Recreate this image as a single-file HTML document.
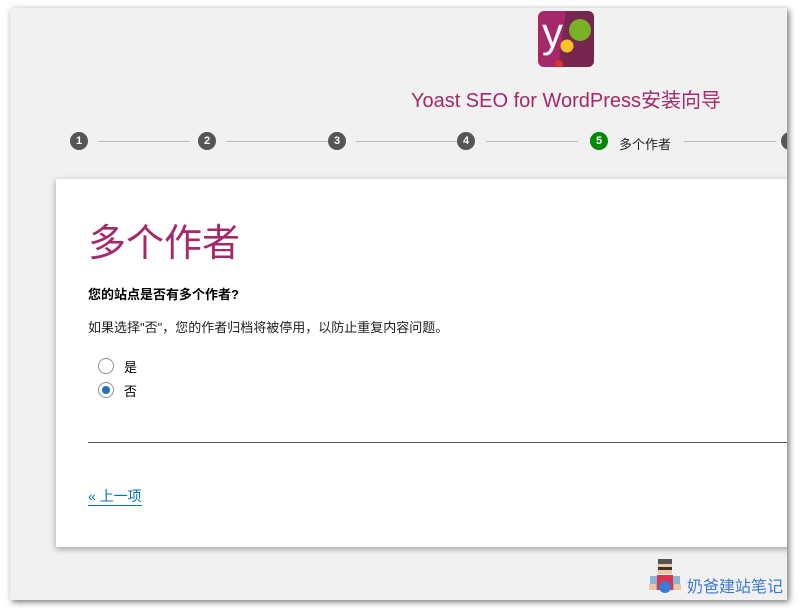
<!DOCTYPE html>
<html><head><meta charset="utf-8"><style>
body{margin:0;width:798px;height:610px;background:#fff;position:relative;overflow:hidden;font-family:"Liberation Sans","Noto Sans CJK SC",sans-serif;}
.frame{position:absolute;left:10px;top:8px;width:777px;height:592px;background:#f1f1f1;box-shadow:2px 2px 6px rgba(0,0,0,.55);overflow:hidden;}
.abs{position:absolute}
.title{left:0;width:1112px;top:76px;text-align:center;color:#a4286a;font-size:20px;}
.line{height:1px;background:#bbb;top:133px}
.c{width:18px;height:18px;border-radius:50%;background:#555;color:#fff;font-size:11px;font-weight:bold;text-align:center;line-height:18px;top:124px}
.card{left:46px;top:171px;width:760px;height:368px;background:#fff;box-shadow:0 2px 6px rgba(0,0,0,.35)}
.radio{width:14px;height:14px;border:1px solid #8c8f94;border-radius:50%;background:#fff}
</style></head><body>
<div class="frame">
  <svg class="abs" style="left:528px;top:3px" width="56" height="56" viewBox="0 0 56 56">
    <rect width="56" height="56" rx="6" fill="#a4286a"/>
    <path d="M28 0H50a6 6 0 0 1 6 6V50a6 6 0 0 1-6 6H20Z" fill="#6c2548" opacity=".8"/>
    <text x="4" y="36" font-family="Liberation Sans" font-size="42" fill="#fff">y</text>
    <circle cx="42" cy="19" r="11" fill="#77b227"/>
    <circle cx="29" cy="35" r="6.5" fill="#fec228"/>
    <circle cx="21" cy="53" r="4" fill="#dc3232"/>
  </svg>
  <div class="abs title">Yoast SEO for WordPress安装向导</div>
  <div class="abs line" style="left:88px;width:92px"></div>
  <div class="abs line" style="left:216px;width:102px"></div>
  <div class="abs line" style="left:346px;width:102px"></div>
  <div class="abs line" style="left:476px;width:92px"></div>
  <div class="abs line" style="left:674px;width:92px"></div>
  <div class="abs c" style="left:60px">1</div>
  <div class="abs c" style="left:188px">2</div>
  <div class="abs c" style="left:318px">3</div>
  <div class="abs c" style="left:447px">4</div>
  <div class="abs c" style="left:580px;background:#008a00">5</div>
  <div class="abs" style="left:609px;top:126px;font-size:13px;color:#222">多个作者</div>
  <div class="abs c" style="left:771px"></div>
  <div class="abs card">
    <div class="abs" style="left:32px;top:42px;font-size:38px;color:#a4286a;line-height:46px">多个作者</div>
    <div class="abs" style="left:32px;top:105px;font-size:13px;font-weight:bold;color:#000">您的站点是否有多个作者?</div>
    <div class="abs" style="left:32px;top:138px;font-size:13px;color:#222">如果选择"否"，您的作者归档将被停用，以防止重复内容问题。</div>
    <div class="abs radio" style="left:42px;top:179px"></div>
    <div class="abs" style="left:68px;top:178px;font-size:13px">是</div>
    <div class="abs radio" style="left:42px;top:203px"><div style="width:8px;height:8px;border-radius:50%;background:#2271b1;margin:3px"></div></div>
    <div class="abs" style="left:68px;top:202px;font-size:13px">否</div>
    <div class="abs" style="left:32px;top:263px;width:740px;height:1px;background:#555"></div>
    <div class="abs" style="left:32px;top:309px;font-size:14px;color:#0073aa;border-bottom:1px solid #0073aa;line-height:17px">« 上一项</div>
  </div>
  <div class="abs" style="left:637px;top:549px;width:36px;height:36px">
    <svg width="36" height="36" viewBox="0 0 36 36"><rect x="11" y="2" width="14" height="6" fill="#555"/><rect x="11" y="7" width="14" height="10" fill="#f0c8a0"/><rect x="11" y="10" width="14" height="3" fill="#333"/><rect x="3" y="19" width="30" height="14" fill="#8ab4d8"/><rect x="10" y="18" width="16" height="15" fill="#e0344a"/><circle cx="18" cy="30" r="6" fill="#3a7bd5"/><rect x="2" y="27" width="7" height="6" fill="#f0c8a0"/><rect x="27" y="27" width="7" height="6" fill="#f0c8a0"/></svg>
  </div>
  <div class="abs" style="left:677px;top:565px;font-size:16px;color:#3a7bd5">奶爸建站笔记</div>
</div>
</body></html>
